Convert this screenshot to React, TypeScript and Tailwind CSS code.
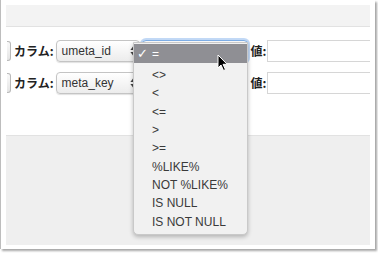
import React from "react";

const ops = ["<>", "<", "<=", ">", ">=", "%LIKE%", "NOT %LIKE%", "IS NULL", "IS NOT NULL"];

const Arrows = () => (
  <svg width="6" height="10" viewBox="0 0 6 10" className="shrink-0">
    <path d="M3 0.5 L5.6 4 L0.4 4 Z" fill="#444" />
    <path d="M3 9.5 L5.6 6 L0.4 6 Z" fill="#444" />
  </svg>
);

const Row: React.FC<{ value: string; focused?: boolean }> = ({ value, focused }) => (
  <div className="flex items-center h-[22px]">
    <div className="w-[4px] h-[20px] ml-[1px] rounded-r-[3px] border border-l-0 border-[#b9b9b9] bg-gradient-to-b from-[#fafafa] to-[#e4e4e4]" />
    <span className="ml-[3px] text-[12px] text-[#222] font-bold" style={{ fontFamily: '"Noto Sans CJK JP", sans-serif' }}>
      カラム:
    </span>
    <div className="ml-[2px] flex items-center justify-between w-[84px] h-[22px] pl-[5px] pr-[3px] rounded-[4px] border border-[#c4c4c4] bg-gradient-to-b from-[#ffffff] to-[#ececec] shadow-[0_1px_1px_rgba(0,0,0,0.12)]">
      <span className="text-[12px] text-[#333]">{value}</span>
      <Arrows />
    </div>
    <div
      className={
        focused
          ? "ml-[2px] w-[106px] h-[22px] rounded-[4px] border border-[#7fb0e8] shadow-[0_0_0_2px_rgba(120,170,235,0.45)] bg-white"
          : "ml-[2px] w-[106px] h-[22px] rounded-[4px] border border-[#c4c4c4] bg-gradient-to-b from-[#ffffff] to-[#ececec]"
      }
    />
    <span className="ml-[3px] text-[12px] text-[#222] font-bold" style={{ fontFamily: '"Noto Sans CJK JP", sans-serif' }}>
      値:
    </span>
    <div className="ml-[1px] flex-1 h-[22px] border border-[#d6d6d6] border-r-0 bg-white" />
  </div>
);

export default function App() {
  return (
    <div className="w-[378px] h-[253px] bg-white" style={{ fontFamily: '"Liberation Sans", Arial, sans-serif' }}>
      <div className="relative w-[375px] h-[249px] border-l border-[#bdbdbd] bg-white shadow-[2px_2px_2px_rgba(0,0,0,0.35)] flex flex-col px-[5px] pt-[5px] pb-[4px]">
        <div className="h-[22px] bg-[#f3f3f3] border-b border-[#e2e2e2]" />
        <div className="flex flex-col gap-[10px] pt-[13px] pb-[41px]">
          <Row value="umeta_id" focused />
          <Row value="meta_key" />
        </div>
        <div className="flex-1 bg-[#efefef] border-t border-[#e2e2e2]" />

        <div className="absolute left-[132px] top-[42px] w-[115px] h-[193px] bg-[#f1f1f1] border border-[#c9c9c9] rounded-b-[5px] shadow-[0_2px_4px_rgba(0,0,0,0.25)] pt-[1px]">
          <div className="flex items-center h-[19px] bg-[#8f8f94] text-white text-[12px]">
            <span className="w-[18px] pl-[3px] text-[13px]">✓</span>
            <span>=</span>
          </div>
          <div className="pt-[3px]">
            {ops.map((o) => (
              <div key={o} className="flex items-center h-[18.3px] pl-[18px] text-[12px] text-[#3a3a3a]">
                {o}
              </div>
            ))}
          </div>
        </div>

        <svg className="absolute left-[216px] top-[54px]" width="12" height="18" viewBox="0 0 12 18">
          <path d="M1 1 L1 14 L4 11 L6.5 16.5 L8.5 15.6 L6 10.3 L10.2 10.3 Z" fill="#000" stroke="#fff" strokeWidth="1" />
        </svg>
      </div>
    </div>
  );
}
